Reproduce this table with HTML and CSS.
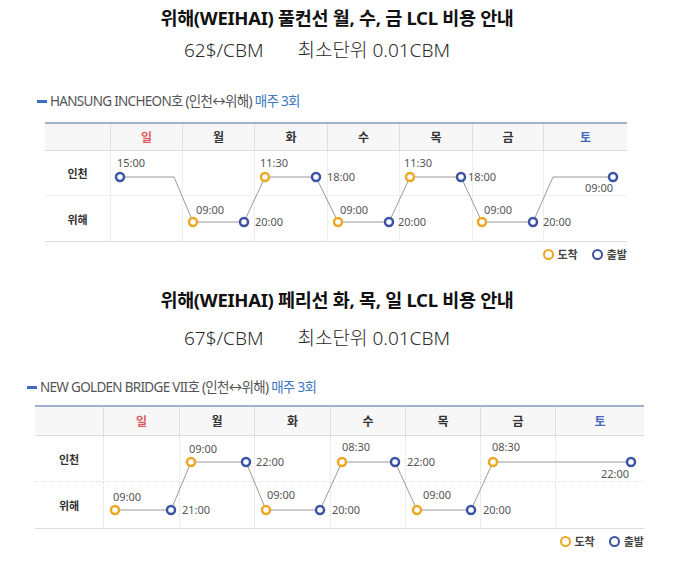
FILE: index.html
```html
<!DOCTYPE html>
<html lang="ko">
<head>
<meta charset="utf-8">
<link rel="stylesheet" href="styles.css">
</head>
<body>
<div class="page">
  <h1 class="title t1">위해(WEIHAI) 풀컨선 월, 수, 금 LCL 비용 안내</h1>
  <p class="price p1"><span>62$/CBM</span><span>최소단위 0.01CBM</span></p>

  <section class="sec s1">
    <h2 class="head"><span class="bar"></span>HANSUNG INCHEON호 (인천↔위해) <em>매주 3회</em></h2>
    <div class="sched">
      <div class="grid">
        <div class="hd first"></div><div class="hd sun">일</div><div class="hd">월</div><div class="hd">화</div><div class="hd">수</div><div class="hd">목</div><div class="hd">금</div><div class="hd sat">토</div>
        <div class="rl r1">인천</div><div class="c r1"></div><div class="c r1"></div><div class="c r1"></div><div class="c r1"></div><div class="c r1"></div><div class="c r1"></div><div class="c r1"></div>
        <div class="rl r2">위해</div><div class="c r2"></div><div class="c r2"></div><div class="c r2"></div><div class="c r2"></div><div class="c r2"></div><div class="c r2"></div><div class="c r2"></div>
      </div>
      <svg class="overlay" width="582" height="120" viewBox="0 0 582 120">
        <polyline class="ln" points="75,55 129,55 148,100 199,100 220,55 271,55 293,100 344,100 365,55 416,55 437,100 488,100 508,55 568,55"/>
        <circle class="dep" cx="75" cy="55" r="4"/>
        <circle class="arr" cx="148" cy="100" r="4"/>
        <circle class="dep" cx="199" cy="100" r="4"/>
        <circle class="arr" cx="220" cy="55" r="4"/>
        <circle class="dep" cx="271" cy="55" r="4"/>
        <circle class="arr" cx="293" cy="100" r="4"/>
        <circle class="dep" cx="344" cy="100" r="4"/>
        <circle class="arr" cx="365" cy="55" r="4"/>
        <circle class="dep" cx="416" cy="55" r="4"/>
        <circle class="arr" cx="437" cy="100" r="4"/>
        <circle class="dep" cx="488" cy="100" r="4"/>
        <circle class="dep" cx="568" cy="55" r="4"/>
        <text x="72" y="45">15:00</text>
        <text x="151" y="92">09:00</text>
        <text x="210" y="104">20:00</text>
        <text x="215" y="45">11:30</text>
        <text x="282" y="59">18:00</text>
        <text x="295" y="92">09:00</text>
        <text x="353" y="104">20:00</text>
        <text x="359" y="45">11:30</text>
        <text x="423" y="59">18:00</text>
        <text x="439" y="92">09:00</text>
        <text x="498" y="104">20:00</text>
        <text x="540" y="70">09:00</text>
      </svg>
    </div>
    <div class="legend"><span class="lg"><i class="dot arr-dot"></i>도착</span><span class="lg"><i class="dot dep-dot"></i>출발</span></div>
  </section>

  <h1 class="title t2">위해(WEIHAI) 페리선 화, 목, 일 LCL 비용 안내</h1>
  <p class="price p2"><span>67$/CBM</span><span>최소단위 0.01CBM</span></p>

  <section class="sec s2">
    <h2 class="head"><span class="bar"></span>NEW GOLDEN BRIDGE VII호 (인천↔위해) <em>매주 3회</em></h2>
    <div class="sched">
      <div class="grid">
        <div class="hd first"></div><div class="hd sun">일</div><div class="hd">월</div><div class="hd">화</div><div class="hd">수</div><div class="hd">목</div><div class="hd">금</div><div class="hd sat">토</div>
        <div class="rl r1">인천</div><div class="c r1"></div><div class="c r1"></div><div class="c r1"></div><div class="c r1"></div><div class="c r1"></div><div class="c r1"></div><div class="c r1"></div>
        <div class="rl r2">위해</div><div class="c r2"></div><div class="c r2"></div><div class="c r2"></div><div class="c r2"></div><div class="c r2"></div><div class="c r2"></div><div class="c r2"></div>
      </div>
      <svg class="overlay" width="609" height="125" viewBox="0 0 609 125">
        <polyline class="ln" points="80,105 136,105 156,57 211,57 231,105 285,105 307,57 360,57 382,105 436,105 458,57 596,57"/>
        <circle class="arr" cx="80" cy="105" r="4"/>
        <circle class="dep" cx="136" cy="105" r="4"/>
        <circle class="arr" cx="156" cy="57" r="4"/>
        <circle class="dep" cx="211" cy="57" r="4"/>
        <circle class="arr" cx="231" cy="105" r="4"/>
        <circle class="dep" cx="285" cy="105" r="4"/>
        <circle class="arr" cx="307" cy="57" r="4"/>
        <circle class="dep" cx="360" cy="57" r="4"/>
        <circle class="arr" cx="382" cy="105" r="4"/>
        <circle class="dep" cx="436" cy="105" r="4"/>
        <circle class="arr" cx="458" cy="57" r="4"/>
        <circle class="dep" cx="596" cy="57" r="4"/>
        <text x="78" y="96">09:00</text>
        <text x="147" y="109">21:00</text>
        <text x="154" y="48">09:00</text>
        <text x="221" y="61">22:00</text>
        <text x="232" y="94">09:00</text>
        <text x="297" y="109">20:00</text>
        <text x="307" y="46">08:30</text>
        <text x="372" y="61">22:00</text>
        <text x="388" y="94">09:00</text>
        <text x="448" y="109">20:00</text>
        <text x="457" y="46">08:30</text>
        <text x="566" y="73">22:00</text>
      </svg>
    </div>
    <div class="legend"><span class="lg"><i class="dot arr-dot"></i>도착</span><span class="lg"><i class="dot dep-dot"></i>출발</span></div>
  </section>
</div>
</body>
</html>
```

FILE: styles.css
```css
* { box-sizing: border-box; }
html, body { margin: 0; padding: 0; background: #fff; }
body {
  font-family: "Noto Sans", "Noto Sans CJK KR", sans-serif;
  color: #222;
  width: 674px;
}
.page { display: flex; flex-direction: column; }

.title {
  margin: 0;
  height: 36px;
  line-height: 36px;
  font-size: 18.5px;
  font-weight: 700;
  text-align: center;
  color: #111;
  letter-spacing: -0.3px;
}
.price {
  margin: 0;
  height: 28px;
  line-height: 28px;
  font-size: 19px;
  font-weight: 300;
  text-align: center;
  color: #2a2a2a;
  display: flex;
  justify-content: center;
  gap: 34px;
  padding-right: 40px;
}
.t2 { margin-top: 16px; }
.p2 { margin-top: 6px; }

.sec { display: flex; flex-direction: column; }
.s1 { margin-left: 37px; width: 590px; margin-top: 28px; }
.s2 { margin-left: 27px; width: 617px; margin-top: 26px; }

.head {
  margin: 0;
  height: 18px;
  line-height: 18px;
  font-size: 13.5px;
  font-weight: 400;
  color: #555;
  letter-spacing: -0.7px;
  display: flex;
  align-items: center;
  white-space: pre;
}
.head em { font-style: normal; color: #3d78c4; }
.head .bar {
  width: 10px;
  height: 3px;
  background: #3d6dbd;
  margin-right: 3px;
}

.sched { position: relative; margin-left: 8px; }
.s1 .sched { margin-top: 12px; }
.s2 .sched { margin-top: 9px; }

.grid {
  display: grid;
  border-top: 2px solid #9db3cd;
  border-bottom: 1px solid #dcdcdc;
}
.s1 .grid {
  grid-template-columns: 65px 72px 72px 73px 72px 73px 71px 84px;
  grid-template-rows: 27px 45px 45px;
}
.s2 .grid {
  grid-template-columns: 68px 76px 75px 76px 75px 75px 75px 89px;
  grid-template-rows: 29px 46px 46px;
}
.hd {
  background: #f7f7f7;
  border-left: 1px solid #dedede;
  border-bottom: 1px solid #dcdcdc;
  font-size: 12px;
  font-weight: 700;
  color: #333;
  display: flex;
  align-items: center;
  justify-content: center;
}
.hd.first { border-left: none; }
.hd.sun { color: #e0585a; }
.hd.sat { color: #4466bb; }
.rl {
  font-size: 11px;
  font-weight: 700;
  color: #333;
  display: flex;
  align-items: center;
  justify-content: center;
}
.c { border-left: 1px solid #eeeeee; }
.s2 .c { border-left: 1px dotted #dddddd; }
.r1 { border-bottom: 1px solid #f0f0f0; }
.s2 .r1 { border-bottom: 1px dotted #e2e2e2; }

.overlay { position: absolute; left: 0; top: 0; }
.overlay .ln { fill: none; stroke: #9a9a9a; stroke-width: 1; }
.overlay circle { fill: #fff; stroke-width: 2.5; }
.overlay .arr { stroke: #eaa823; }
.overlay .dep { stroke: #3a53a4; }
.overlay text {
  font-family: "Noto Sans", sans-serif;
  font-size: 11px;
  fill: #555;
}

.legend {
  margin-left: 8px;
  height: 24px;
  display: flex;
  justify-content: flex-end;
  align-items: center;
  gap: 14px;
}
.lg {
  display: flex;
  align-items: center;
  gap: 4px;
  font-size: 11px;
  font-weight: 700;
  color: #444;
}
.dot {
  width: 11px;
  height: 11px;
  border-radius: 50%;
  border: 2.5px solid #000;
  background: #fff;
}
.arr-dot { border-color: #eaa823; }
.dep-dot { border-color: #3a53a4; }
```
